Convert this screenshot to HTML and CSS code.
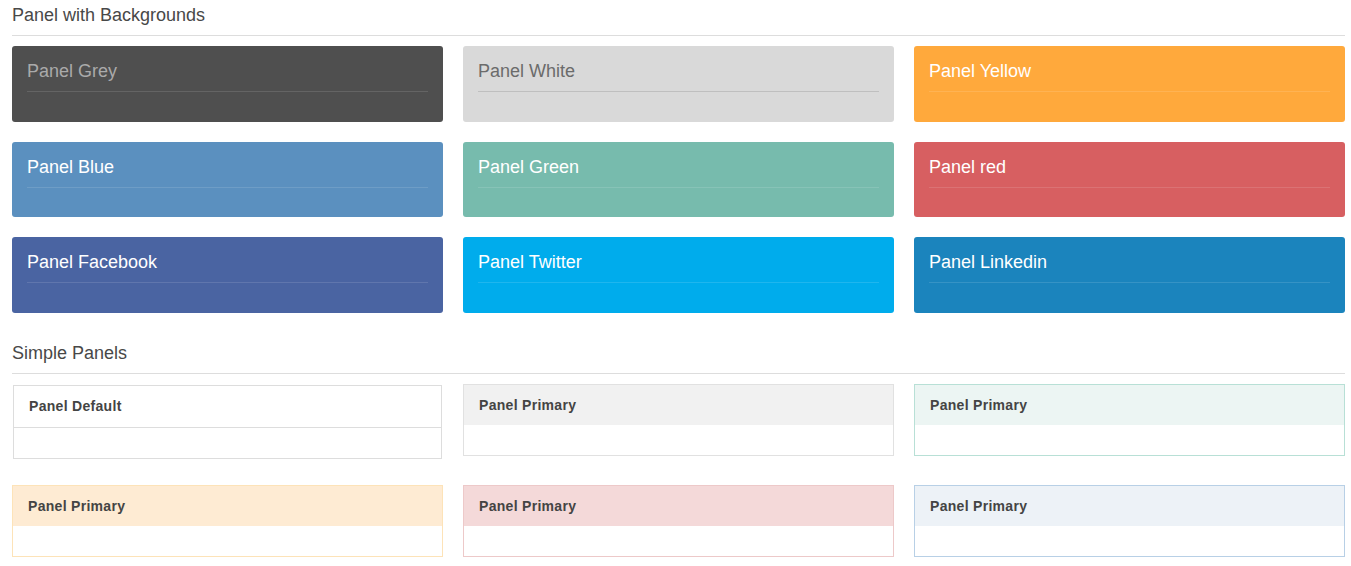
FILE: index.html
```html
<!DOCTYPE html>
<html lang="en">
<head>
<meta charset="utf-8">
<title>Panels</title>
<link rel="stylesheet" href="styles.css">
</head>
<body>
<main class="page">
  <h2 class="section-title">Panel with Backgrounds</h2>
  <div class="bg-grid">
    <div class="bpanel bp-grey"><div class="bpanel-head">Panel Grey</div><div class="bpanel-body"></div></div>
    <div class="bpanel bp-white"><div class="bpanel-head">Panel White</div><div class="bpanel-body"></div></div>
    <div class="bpanel bp-yellow"><div class="bpanel-head">Panel Yellow</div><div class="bpanel-body"></div></div>
    <div class="bpanel bp-blue"><div class="bpanel-head">Panel Blue</div><div class="bpanel-body"></div></div>
    <div class="bpanel bp-green"><div class="bpanel-head">Panel Green</div><div class="bpanel-body"></div></div>
    <div class="bpanel bp-red"><div class="bpanel-head">Panel red</div><div class="bpanel-body"></div></div>
    <div class="bpanel bp-facebook"><div class="bpanel-head">Panel Facebook</div><div class="bpanel-body"></div></div>
    <div class="bpanel bp-twitter"><div class="bpanel-head">Panel Twitter</div><div class="bpanel-body"></div></div>
    <div class="bpanel bp-linkedin"><div class="bpanel-head">Panel Linkedin</div><div class="bpanel-body"></div></div>
  </div>

  <h2 class="section-title second">Simple Panels</h2>
  <div class="simple-grid">
    <div class="spanel sp-default"><div class="spanel-head">Panel Default</div><div class="spanel-body"></div></div>
    <div class="spanel sp-primary"><div class="spanel-head">Panel Primary</div><div class="spanel-body"></div></div>
    <div class="spanel sp-green"><div class="spanel-head">Panel Primary</div><div class="spanel-body"></div></div>
    <div class="spanel sp-yellow"><div class="spanel-head">Panel Primary</div><div class="spanel-body"></div></div>
    <div class="spanel sp-red"><div class="spanel-head">Panel Primary</div><div class="spanel-body"></div></div>
    <div class="spanel sp-blue"><div class="spanel-head">Panel Primary</div><div class="spanel-body"></div></div>
  </div>
</main>
</body>
</html>
```

FILE: styles.css
```css
* { box-sizing: border-box; }

body {
  margin: 0;
  background: #fff;
  font-family: "Liberation Sans", Arial, Helvetica, sans-serif;
  color: #444;
}

.page {
  padding: 4px 6px 0 12px;
}

.section-title {
  margin: 0 0 10px;
  padding-bottom: 9px;
  border-bottom: 1px solid #ddd;
  font-size: 18px;
  font-weight: normal;
  line-height: 22px;
  color: #484848;
}

.section-title.second {
  margin-top: 29.5px;
}

/* Background panels */
.bg-grid {
  display: grid;
  grid-template-columns: repeat(3, 1fr);
  column-gap: 20px;
  row-gap: 20px;
}

.bpanel {
  border-radius: 3px;
  padding: 15px 15px 0;
  color: #fff;
}

.bpanel-head {
  font-size: 18px;
  line-height: 20px;
  padding-bottom: 10px;
  border-bottom: 1px solid rgba(255, 255, 255, 0.12);
}

.bpanel-body {
  height: 29.5px;
}

.bp-grey { background: #4f4f4f; color: #aaaaaa; }
.bp-white { background: #d9d9d9; color: #6b6b6b; }
.bp-white .bpanel-head { border-bottom-color: #bfbfbf; }
.bp-yellow { background: #ffa93c; }
.bp-blue { background: #5b90bf; }
.bp-green { background: #77bbad; }
.bp-red { background: #d75f61; }
.bp-facebook { background: #4a64a2; }
.bp-twitter { background: #00acec; }
.bp-linkedin { background: #1b84bd; }

/* Simple panels */
.simple-grid {
  display: grid;
  grid-template-columns: repeat(3, 1fr);
  column-gap: 20px;
  row-gap: 26px;
  align-items: start;
}

.spanel {
  border: 1px solid #ddd;
  background: #fff;
}

.spanel-head {
  padding: 10px 15px;
  font-size: 14px;
  font-weight: bold;
  line-height: 20px;
  letter-spacing: 0.3px;
  color: #444;
}

.spanel-body {
  height: 30px;
}

.sp-default { margin: 1px 1px 0; }
.sp-default .spanel-head { padding: 10px 15px 11px; border-bottom: 1px solid #ddd; }
.sp-primary { border-color: #e1e1e1; }
.sp-primary .spanel-head { background: #f1f1f1; }
.sp-green { border-color: #b8e0d6; }
.sp-green .spanel-head { background: #ecf5f3; }
.sp-yellow { border-color: #fde3b8; }
.sp-yellow .spanel-head { background: #feebd3; }
.sp-red { border-color: #edc9c9; }
.sp-red .spanel-head { background: #f4d9d9; }
.sp-blue { border-color: #b8d0e6; }
.sp-blue .spanel-head { background: #edf2f7; }
```
